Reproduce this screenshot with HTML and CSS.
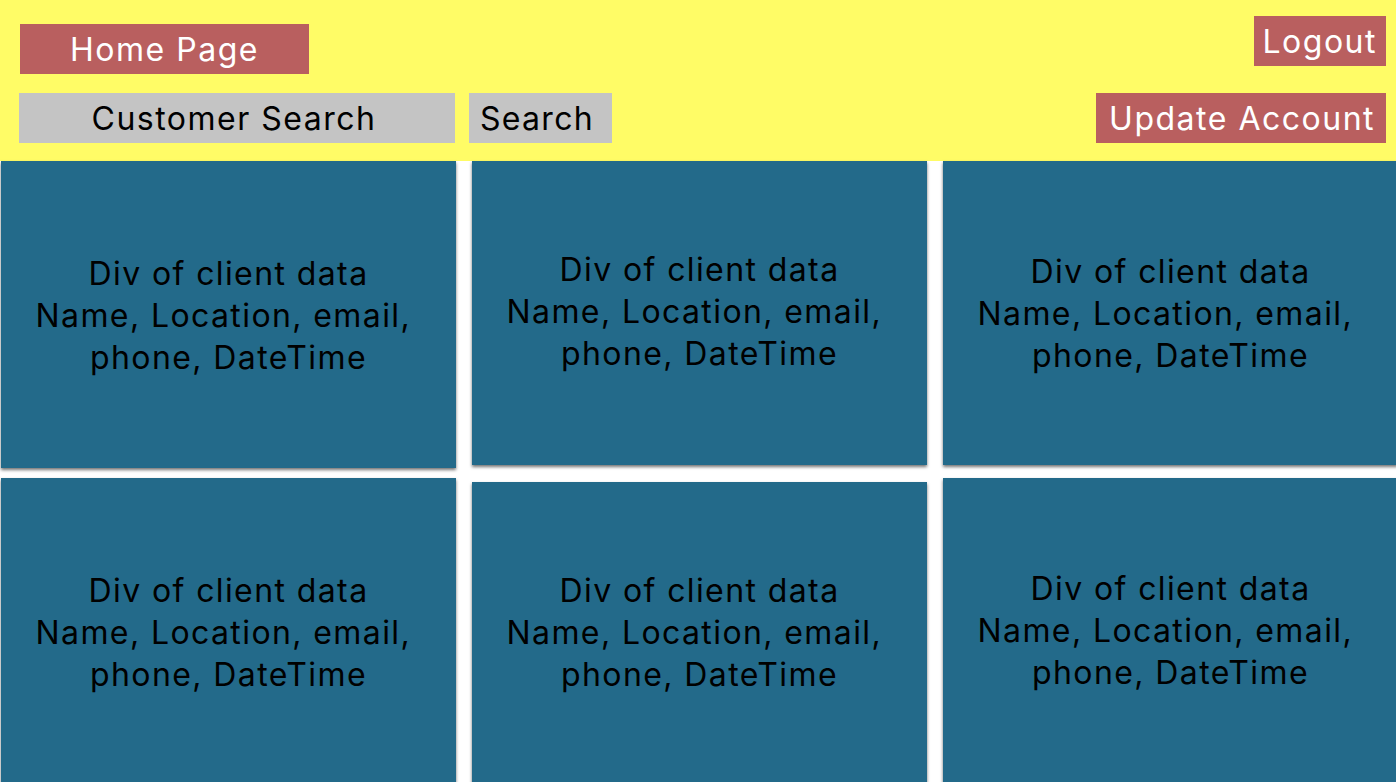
FILE: index.html
```html
<!DOCTYPE html>
<html lang="en">
<head>
    <meta charset="UTF-8">
    <meta name="viewport" content="width=device-width, initial-scale=1.0">
    <title>Customer Search</title>
    <link rel="stylesheet" href="styles.css">
</head>
<body>
    <header class="top-bar">
        <div class="top-left">
            <button class="btn btn-red home-btn">Home Page</button>
            <div class="search-row">
                <input class="search-input" type="text" value="Customer Search">
                <button class="btn btn-gray search-btn">Search</button>
            </div>
        </div>
        <div class="top-right">
            <button class="btn btn-red logout-btn">Logout</button>
            <button class="btn btn-red account-btn">Update Account</button>
        </div>
    </header>

    <main class="client-grid">
        <div class="client-card">Div of client data<br>Name, Location, email,&nbsp;<br>phone, DateTime</div>
        <div class="client-card">Div of client data<br>Name, Location, email,&nbsp;<br>phone, DateTime</div>
        <div class="client-card">Div of client data<br>Name, Location, email,&nbsp;<br>phone, DateTime</div>
        <div class="client-card">Div of client data<br>Name, Location, email,&nbsp;<br>phone, DateTime</div>
        <div class="client-card">Div of client data<br>Name, Location, email,&nbsp;<br>phone, DateTime</div>
        <div class="client-card">Div of client data<br>Name, Location, email,&nbsp;<br>phone, DateTime</div>
    </main>
</body>
</html>
```

FILE: styles.css
```css
* {
    margin: 0;
    padding: 0;
    box-sizing: border-box;
}

body {
    font-family: Inter, 'Liberation Sans', sans-serif;
    background: white;
    color: #000;
    overflow: hidden;
}

.top-bar {
    height: 161px;
    background: #fffc66;
    display: flex;
    justify-content: space-between;
    padding: 0 10px 0 19px;
}

.top-left {
    display: flex;
    flex-direction: column;
    gap: 19px;
    padding-top: 24px;
}

.top-right {
    display: flex;
    flex-direction: column;
    align-items: flex-end;
    gap: 27px;
    padding-top: 16px;
}

.btn {
    font-family: inherit;
    font-size: 32px;
    letter-spacing: 1.5px;
    height: 50px;
    border: none;
    padding: 0 10px;
    cursor: pointer;
}

.btn-red {
    background: #b95f5f;
    color: white;
}

.btn-gray {
    background: #c4c4c4;
    color: #000;
}

.home-btn {
    width: 289px;
    margin-left: 1px;
}

.search-row {
    display: flex;
    gap: 14px;
}

.search-input {
    width: 436px;
    height: 50px;
    border: none;
    background: #c4c4c4;
    font-family: inherit;
    font-size: 32px;
    letter-spacing: 1.5px;
    color: #000;
    text-align: center;
    padding-right: 6px;
}

.search-btn {
    width: 143px;
    text-align: left;
    padding-left: 11px;
    letter-spacing: 1.3px;
}

.logout-btn {
    padding: 0 9px;
}

.account-btn {
    padding: 0 11px 0 13px;
}

.client-grid {
    display: grid;
    grid-template-columns: repeat(3, 455px);
    grid-auto-rows: 305px;
    column-gap: 16px;
    row-gap: 12px;
    margin-left: 1px;
}

.client-card {
    background: #236a8a;
    display: flex;
    align-items: center;
    justify-content: center;
    text-align: center;
    font-size: 32px;
    letter-spacing: 1.4px;
    line-height: 42px;
    box-shadow: 0 2px 3px rgba(0, 0, 0, 0.55);
}

.client-card:nth-child(1) {
    height: 307px;
    padding-top: 2px;
}

.client-card:nth-child(2) {
    height: 304px;
    padding-bottom: 3px;
}

.client-card:nth-child(3) {
    height: 304px;
    padding-top: 2px;
}

.client-card:nth-child(4) {
    padding-top: 4px;
}

.client-card:nth-child(5) {
    margin-top: 4px;
}
```
